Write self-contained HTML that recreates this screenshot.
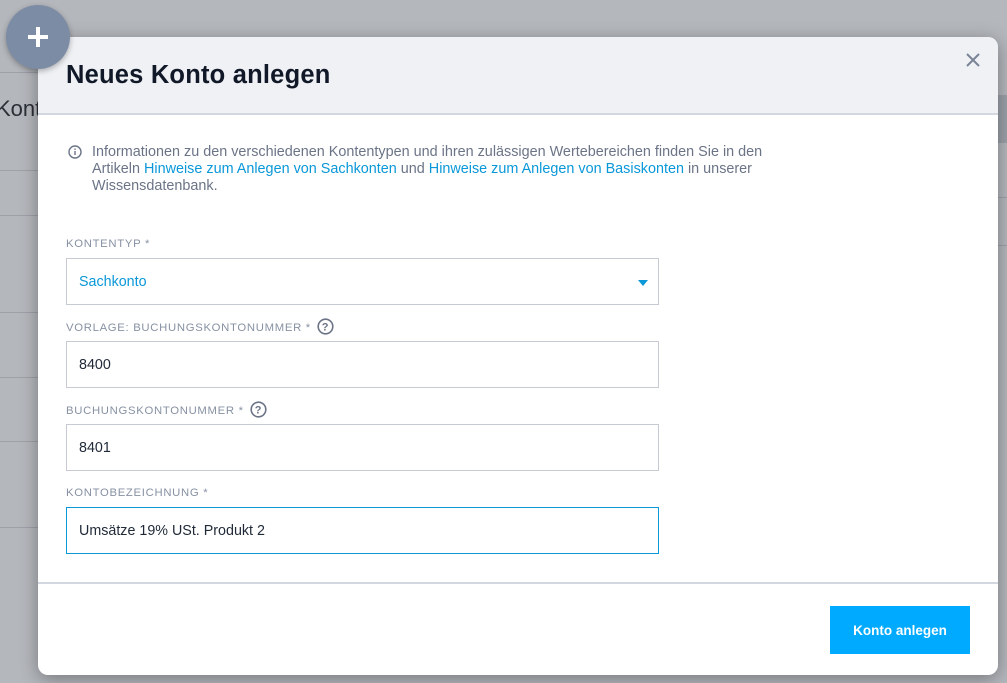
<!DOCTYPE html>
<html><head><meta charset="utf-8"><style>
*{box-sizing:border-box;margin:0;padding:0}
body{width:1007px;height:683px;overflow:hidden;background:#b4b7bc;font-family:"Liberation Sans",sans-serif;position:relative}
.ln{position:absolute;left:0;width:40px;height:1px;background:#9da1a8}
.rl{position:absolute;left:998px;width:9px;height:1px;background:#9da1a8}
.modal{position:absolute;left:38px;top:37px;width:960px;height:638px;background:#fff;border-radius:10px;box-shadow:0 4px 18px rgba(0,0,0,.35);overflow:hidden}
.hd{height:78px;background:#eff1f5;border-bottom:2px solid #d3d8e0;position:relative}
.hd h1{position:absolute;left:28px;top:24px;font-size:25.5px;font-weight:bold;color:#111827;letter-spacing:.2px}
.x{position:absolute;right:16px;top:14px;width:18px;height:18px}
.info{position:absolute;left:54px;top:107px;width:800px;font-size:14.4px;line-height:17px;color:#6b7487;white-space:nowrap}
.info a{color:#0a98d8;text-decoration:none}
.ic{position:absolute;left:30px;top:108px}
.lb{position:absolute;left:28px;font-size:11.3px;letter-spacing:.7px;color:#8791a3}
.in{position:absolute;left:28px;width:593px;height:47px;border:1px solid #c5cad3;font-size:14.3px;color:#1f2937;padding:15px 12px}
.q{display:inline-block;vertical-align:middle;margin-left:6px;margin-top:-3px}
.ft{position:absolute;left:0;top:545px;width:100%;height:2px;background:#d3d8e0}
.btn{position:absolute;left:792px;top:569px;width:140px;height:48px;background:#00aaff;color:#fff;font-weight:bold;font-size:13.5px;text-align:center;line-height:50px}
.plus{position:absolute;left:6px;top:5px;width:64px;height:64px;border-radius:50%;background:#7d8ca5;box-shadow:0 2px 6px rgba(0,0,0,.3)}
</style></head><body>
<div class="ln" style="top:72px"></div><div class="ln" style="top:170px"></div><div class="ln" style="top:215px"></div><div class="ln" style="top:312px"></div><div class="ln" style="top:377px"></div><div class="ln" style="top:441px"></div><div class="ln" style="top:527px"></div>
<div style="position:absolute;left:-4px;top:96px;font-size:22px;color:#2b2f36">Kont</div>
<div style="position:absolute;left:998px;top:95px;width:9px;height:48px;background:#9ca1a9"></div>
<div class="rl" style="top:197px"></div><div class="rl" style="top:245px"></div>
<div class="modal">
 <div class="hd"><h1>Neues Konto anlegen</h1>
  <svg class="x" viewBox="0 0 18 18"><path d="M3 3L15 15M15 3L3 15" stroke="#7a8496" stroke-width="2" fill="none"/></svg></div>
 <svg class="ic" width="14" height="14" viewBox="0 0 14 14"><circle cx="7" cy="7" r="6" fill="none" stroke="#6b7487" stroke-width="1.4"/><rect x="6.3" y="6" width="1.4" height="4" fill="#6b7487"/><rect x="6.3" y="3.5" width="1.4" height="1.4" fill="#6b7487"/></svg>
 <div class="info">Informationen zu den verschiedenen Kontentypen und ihren zulässigen Wertebereichen finden Sie in den<br>Artikeln <a>Hinweise zum Anlegen von Sachkonten</a> und <a>Hinweise zum Anlegen von Basiskonten</a> in unserer<br>Wissensdatenbank.</div>
 <div class="lb" style="top:201px">KONTENTYP *</div>
 <div class="in" style="top:221px;color:#0a98d8">Sachkonto<svg style="position:absolute;right:10px;top:21px" width="10" height="6"><path d="M0 0H10L5 6Z" fill="#0a98d8"/></svg></div>
 <div class="lb" style="top:284px">VORLAGE: BUCHUNGSKONTONUMMER *<svg class="q" width="17" height="17" viewBox="0 0 17 17"><circle cx="8.5" cy="8.5" r="7.3" fill="none" stroke="#6b7487" stroke-width="1.6"/><text x="8.5" y="12.5" font-size="11" font-weight="bold" text-anchor="middle" fill="#6b7487" font-family="Liberation Sans">?</text></svg></div>
 <div class="in" style="top:304px">8400</div>
 <div class="lb" style="top:367px">BUCHUNGSKONTONUMMER *<svg class="q" width="17" height="17" viewBox="0 0 17 17"><circle cx="8.5" cy="8.5" r="7.3" fill="none" stroke="#6b7487" stroke-width="1.6"/><text x="8.5" y="12.5" font-size="11" font-weight="bold" text-anchor="middle" fill="#6b7487" font-family="Liberation Sans">?</text></svg></div>
 <div class="in" style="top:387px">8401</div>
 <div class="lb" style="top:450px">KONTOBEZEICHNUNG *</div>
 <div class="in" style="top:470px;border-color:#0a98d8">Umsätze 19% USt. Produkt 2</div>
 <div class="ft"></div>
 <div class="btn">Konto anlegen</div>
</div>
<div class="plus"><svg width="64" height="64"><path d="M32 22V42M22 32H42" stroke="#fff" stroke-width="4"/></svg></div>
</body></html>
